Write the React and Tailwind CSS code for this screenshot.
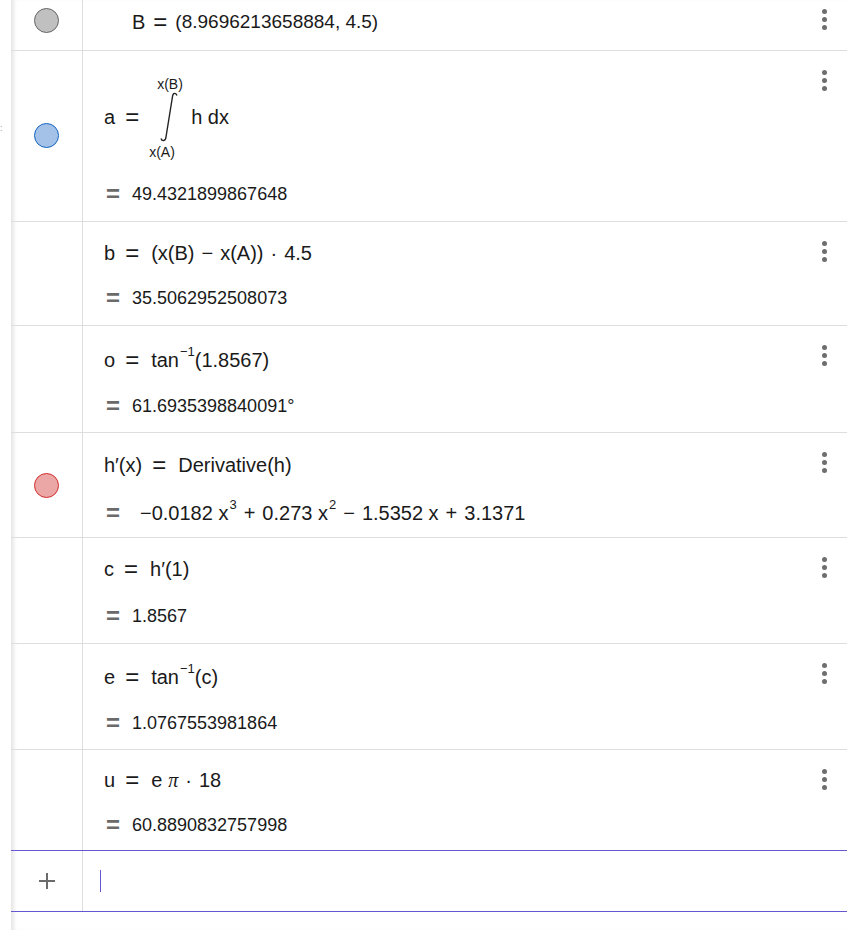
import React from 'react';

const Dots = () => (
  <div className="absolute right-[20px] flex flex-col gap-[3px]">
    <span className="block w-[5px] h-[5px] rounded-full bg-[#6e6e6e]" />
    <span className="block w-[5px] h-[5px] rounded-full bg-[#6e6e6e]" />
    <span className="block w-[5px] h-[5px] rounded-full bg-[#6e6e6e]" />
  </div>
);

// equals sign with math spacing
const Eq = ({ l = 10, r = 12 }) => (
  <span className="text-[24px] leading-none" style={{ marginLeft: l, marginRight: r }}>
    =
  </span>
);

const Op = ({ children }) => <span className="mx-[7px]">{children}</span>;

const ValueLine = ({ children, big }) => (
  <div className="flex items-center h-[24px]">
    <span className="w-[28px] pl-[2px] text-[24px] leading-none font-bold text-[#6a6a6a]">=</span>
    <span className={big ? 'text-[20px]' : 'text-[18px]'}>{children}</span>
  </div>
);

const Sup = ({ children }) => (
  <span className="text-[13px] relative -top-[8px] ml-[1px]">{children}</span>
);

const Row = ({ height, circle, circleY, pt, gap, defH = 24, dotsTop = 19, def, value, big, last }) => (
  <div
    className={
      'relative flex border-b ' +
      (last ? 'border-[#6557d2]' : 'border-[#dedede]')
    }
    style={{ height }}
  >
    {/* colour toggle */}
    <div className="relative w-[72px] shrink-0 border-r border-[#dedede]">
      {circle && (
        <span
          className={'absolute left-[23px] w-[25px] h-[25px] rounded-full border ' + circle}
          style={{ top: circleY }}
        />
      )}
    </div>
    {/* expression */}
    <div className="flex-1 flex flex-col pl-[21px]" style={{ paddingTop: pt, gap }}>
      <div className="flex items-center text-[20px]" style={{ height: defH }}>
        {def}
      </div>
      <ValueLine big={big}>{value}</ValueLine>
    </div>
    <div className="absolute right-0" style={{ top: dotsTop }}>
      <Dots />
    </div>
  </div>
);

const Integral = () => (
  <>
    <span>a</span>
    <Eq l={10} r={0} />
    <div className="relative w-[52px] h-[87px] shrink-0">
      <span className="absolute left-[18px] top-[2px] text-[14px] leading-[18px]">x(B)</span>
      <svg className="absolute left-[21px] top-[19px]" width="18" height="50" viewBox="0 0 18 50">
        <path
          d="M17 3.5 C16 0.5 13 0.5 12.5 4.5 L6 45 C5.5 49.5 2 49.5 1 46.5"
          fill="none"
          stroke="#222"
          strokeWidth="1.4"
        />
      </svg>
      <span className="absolute left-[10px] top-[70px] text-[14px] leading-[18px]">x(A)</span>
    </div>
    <span>h dx</span>
  </>
);

export default function App() {
  return (
    <div
      className="w-[847px] h-[930px] bg-white flex text-[18px] text-[#1a1a1a] overflow-hidden"
      style={{ fontFamily: '"Liberation Sans", Arial, sans-serif' }}
    >
      <div className="w-[11px] shrink-0 bg-white relative">
        <span className="absolute left-0 top-[124px] text-[9px] text-[#999] leading-none">:</span>
      </div>
      <div className="flex-1 flex flex-col shadow-[inset_5px_0_5px_-3px_rgba(0,0,0,0.13)]">
        {/* point B */}
        <div className="relative flex border-b border-[#dedede] h-[51px]">
          <div className="relative w-[72px] shrink-0 border-r border-[#dedede]">
            <span className="absolute left-[23px] top-[8px] w-[25px] h-[25px] rounded-full border border-[#666] bg-[#c0c0c0]" />
          </div>
          <div className="flex-1 flex items-center h-[44px] pl-[49px] text-[20px]">
            <span>B</span>
            <Eq l={8} r={8} />
            <span className="text-[19px]">(8.9696213658884, 4.5)</span>
          </div>
          <div className="absolute right-0 top-[9px]">
            <Dots />
          </div>
        </div>

        <Row
          height={171}
          circle="border-[#1565c0] bg-[#a4c2e8]"
          circleY={72}
          pt={22}
          gap={22}
          defH={87}
          def={<Integral />}
          value="49.4321899867648"
        />

        <Row
          height={104}
          pt={19}
          gap={21}
          def={
            <>
              <span>b</span>
              <Eq />
              <span>(x(B)</span>
              <Op>−</Op>
              <span>x(A))</span>
              <Op>·</Op>
              <span>4.5</span>
            </>
          }
          value="35.5062952508073"
        />

        <Row
          height={107}
          pt={22}
          gap={22}
          def={
            <>
              <span>o</span>
              <Eq />
              <span>tan</span>
              <Sup>−1</Sup>
              <span>(1.8567)</span>
            </>
          }
          value="61.6935398840091°"
        />

        <Row
          height={105}
          circle="border-[#d32f2f] bg-[#eba6a6]"
          circleY={40}
          pt={20}
          gap={24}
          big
          def={
            <>
              <span>h′(x)</span>
              <Eq />
              <span>Derivative(h)</span>
            </>
          }
          value={
            <span className="ml-[8px] flex items-center">
              −0.0182 x<Sup>3</Sup>
              <Op>+</Op>0.273 x<Sup>2</Sup>
              <Op>−</Op>1.5352 x<Op>+</Op>3.1371
            </span>
          }
        />

        <Row
          height={106}
          pt={19}
          gap={23}
          def={
            <>
              <span>c</span>
              <Eq />
              <span>h′(1)</span>
            </>
          }
          value="1.8567"
        />

        <Row
          height={106}
          pt={21}
          gap={22}
          def={
            <>
              <span>e</span>
              <Eq />
              <span>tan</span>
              <Sup>−1</Sup>
              <span>(c)</span>
            </>
          }
          value="1.0767553981864"
        />

        <Row
          height={101}
          last
          pt={18}
          gap={21}
          def={
            <>
              <span>u</span>
              <Eq />
              <span>e</span>
              <span className="italic ml-[6px]" style={{ fontFamily: '"Liberation Serif", serif' }}>
                π
              </span>
              <Op>·</Op>
              <span>18</span>
            </>
          }
          value="60.8890832757998"
        />

        {/* input row */}
        <div className="flex h-[61px] border-b border-[#6557d2]">
          <div className="w-[72px] shrink-0 border-r border-[#dedede] flex items-center justify-center">
            <svg width="18" height="18" viewBox="0 0 18 18">
              <path d="M9 1 V17 M1 9 H17" stroke="#6b6b6b" strokeWidth="2" />
            </svg>
          </div>
          <div className="flex-1 flex items-center pl-[17px]">
            <span className="block w-[1px] h-[22px] bg-[#6557d2]" />
          </div>
        </div>
      </div>
    </div>
  );
}
